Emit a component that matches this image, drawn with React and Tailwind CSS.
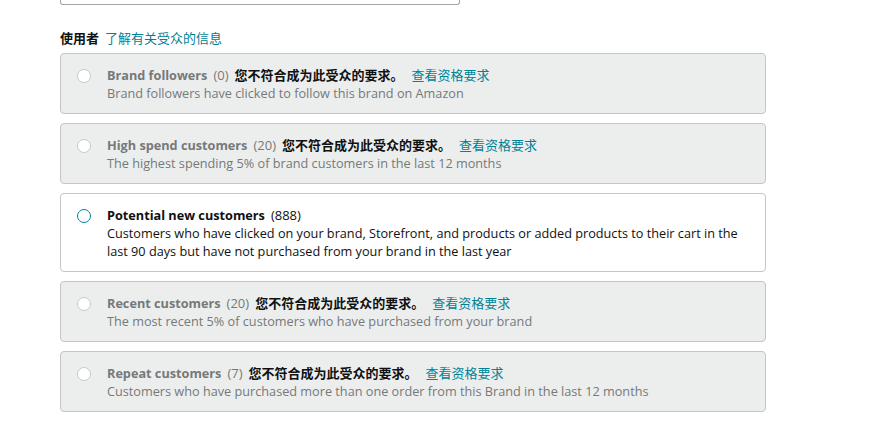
import React from 'react';

const audiences = [
  {
    title: "Brand followers",
    count: "(0)",
    disabled: true,
    description: "Brand followers have clicked to follow this brand on Amazon"
  },
  {
    title: "High spend customers",
    count: "(20)",
    disabled: true,
    description: "The highest spending 5% of brand customers in the last 12 months"
  },
  {
    title: "Potential new customers",
    count: "(888)",
    disabled: false,
    description: "Customers who have clicked on your brand, Storefront, and products or added products to their cart in the last 90 days but have not purchased from your brand in the last year"
  },
  {
    title: "Recent customers",
    count: "(20)",
    disabled: true,
    description: "The most recent 5% of customers who have purchased from your brand"
  },
  {
    title: "Repeat customers",
    count: "(7)",
    disabled: true,
    description: "Customers who have purchased more than one order from this Brand in the last 12 months"
  }
];

const AudienceCard = ({ item }) => {
  const off = item.disabled;
  return (
    <div className={`flex rounded-[4px] border pl-[16px] pr-[20px] pt-[12px] pb-[11px] ${off ? 'bg-[#eceeee] border-[#c3c6c6]' : 'bg-white border-[#c3c6c6]'}`}>
      <div className="pt-[3px] w-[14px] shrink-0">
        <div className={`w-[14px] h-[14px] rounded-full border bg-white ${off ? 'border-[#c6c9c9]' : 'border-[#008296]'}`} />
      </div>
      <div className="ml-[16px] text-[12.7px] leading-[18px]">
        <div className="flex items-baseline">
          <span className={`font-bold ${off ? 'text-[#767979]' : 'text-[#0f1111]'}`}>{item.title}</span>
          <span className={`ml-[6px] text-[13px] ${off ? 'text-[#767979]' : 'text-[#0f1111]'}`}>{item.count}</span>
          {off && (
            <>
              <span className="ml-[6px] text-[13px] font-bold text-[#0f1111]">您不符合成为此受众的要求。</span>
              <span className="ml-[8px] text-[13px] text-[#008296]">查看资格要求</span>
            </>
          )}
        </div>
        <div className={off ? 'text-[#767979]' : 'text-[#0f1111]'}>{item.description}</div>
      </div>
    </div>
  );
};

const App = () => {
  return (
    <div className="w-[874px] h-[445px] bg-white overflow-hidden" style={{ fontFamily: '"Open Sans", "Noto Sans CJK SC", sans-serif' }}>
      <div className="pl-[60px]">
        <div className="w-[400px] h-[5px] border border-t-0 border-[#a6a6a6] rounded-b-[3px]" />
        <div className="mt-[24px] flex items-baseline text-[13px] leading-[18px]">
          <span className="font-bold text-[#0f1111]">使用者</span>
          <span className="ml-[6px] text-[#008296]">了解有关受众的信息</span>
        </div>
        <div className="mt-[6px] w-[706px] flex flex-col gap-[9px]">
          {audiences.map((item, index) => (
            <AudienceCard key={index} item={item} />
          ))}
        </div>
      </div>
    </div>
  );
};

export default App;
